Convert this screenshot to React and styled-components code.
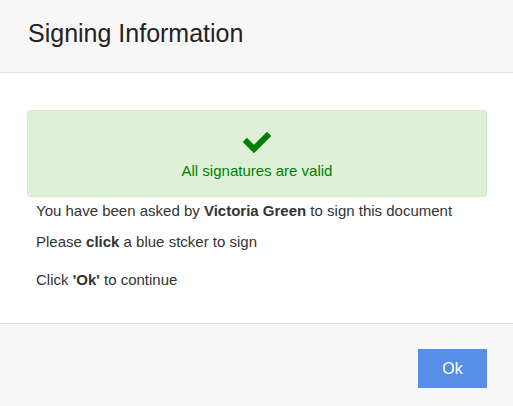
import React from "react";
import styled, { createGlobalStyle } from "styled-components";

const GlobalStyle = createGlobalStyle`
	html, body {
		margin: 0;
		padding: 0;
		background: #fff;
	}
	body {
		font-family: "Liberation Sans", Arial, sans-serif;
		color: #333;
	}
`;

const Modal = styled.div`
	width: 513px;
	height: 406px;
	display: flex;
	flex-direction: column;
	background: #fff;
`;

const Header = styled.header`
	height: 73px;
	box-sizing: border-box;
	background: #f7f7f7;
	border-bottom: 1px solid #e0e0e0;
	display: flex;
	align-items: center;
	padding: 0 28px 5px;
	h1 {
		margin: 0;
		font-size: 25px;
		font-weight: 400;
		color: #222;
	}
`;

const Body = styled.section`
	flex: 1;
	padding: 37px 26px 0 27px;
`;

const Alert = styled.div`
	height: 87px;
	box-sizing: border-box;
	background: #dff0d8;
	border: 1px solid #d3e8c3;
	border-radius: 4px;
	display: flex;
	flex-direction: column;
	align-items: center;
	padding-top: 20px;
	color: #008000;
	font-size: 15px;
	span {
		margin-top: 9px;
	}
`;

const Line = styled.p`
	margin: ${(p) => p.$top}px 0 0 9px;
	font-size: 15px;
	line-height: 17px;
	color: #333;
`;

const Footer = styled.footer`
	height: 83px;
	box-sizing: border-box;
	background: #f7f7f7;
	border-top: 1px solid #e0e0e0;
	display: flex;
	justify-content: flex-end;
	padding: 25px 26px 0 0;
`;

const Button = styled.button`
	width: 69px;
	height: 39px;
	border: none;
	border-radius: 0;
	background: #568ee8;
	color: #fff;
	font-family: "Liberation Sans", Arial, sans-serif;
	font-size: 16px;
	cursor: pointer;
`;

const Check = () => (
	<svg width="28" height="22" viewBox="0 0 28 22">
		<polyline
			points="4,11 11,18 24,5"
			fill="none"
			stroke="#008000"
			strokeWidth="6"
			strokeLinecap="square"
		/>
	</svg>
);

export default function App() {
	return (
		<Modal>
			<GlobalStyle />
			<Header>
				<h1>Signing Information</h1>
			</Header>
			<Body>
				<Alert>
					<Check />
					<span>All signatures are valid</span>
				</Alert>
				<Line $top={5}>
					You have been asked by <b>Victoria Green</b> to sign this document
				</Line>
				<Line $top={14}>
					Please <b>click</b> a blue stcker to sign
				</Line>
				<Line $top={21}>
					Click <b>'Ok'</b> to continue
				</Line>
			</Body>
			<Footer>
				<Button>Ok</Button>
			</Footer>
		</Modal>
	);
}
